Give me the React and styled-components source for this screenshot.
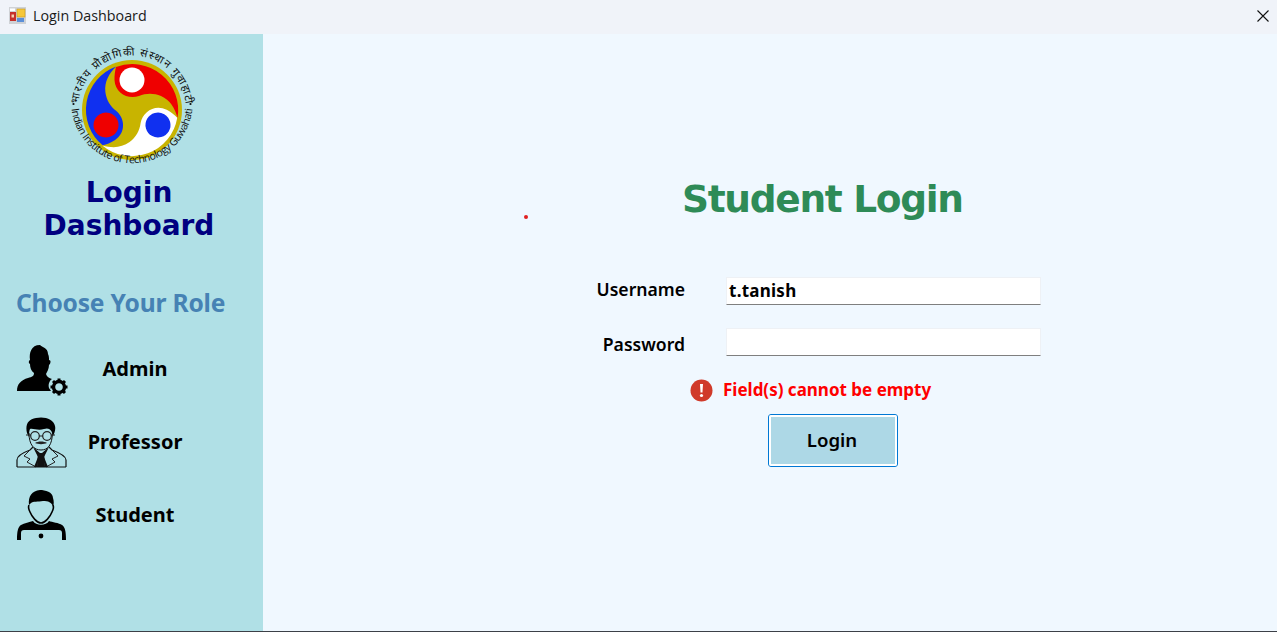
import React from "react";
import styled, { createGlobalStyle } from "styled-components";

const Global = createGlobalStyle`
  html, body { margin: 0; padding: 0; height: 100%; overflow: hidden; }
  #root { height: 100%; }
`;

const Window = styled.div`
  width: 1277px;
  height: 632px;
  display: flex;
  flex-direction: column;
  border-bottom: 1px solid #3c4047;
  box-sizing: border-box;
  font-family: "Noto Sans", sans-serif;
  overflow: hidden;
`;

const TitleBar = styled.header`
  height: 34px;
  flex: none;
  background: #f0f3f9;
  display: flex;
  align-items: center;
  padding: 0 7px 3px 9px;
  box-sizing: border-box;
  gap: 7px;
  color: #1a1a1a;
  font-size: 14.3px;
  font-family: "Open Sans", sans-serif;
`;

const TitleText = styled.span`
  flex: 1;
`;

const CloseButton = styled.button`
  width: 14px;
  height: 14px;
  padding: 0;
  border: 0;
  background: none;
  display: flex;
`;

const Body = styled.div`
  flex: 1;
  display: flex;
  min-height: 0;
`;

const Sidebar = styled.aside`
  width: 263px;
  flex: none;
  background: #b0e0e6;
  display: flex;
  flex-direction: column;
  padding-top: 8px;
  box-sizing: border-box;
`;

const LogoWrap = styled.div`
  display: flex;
  justify-content: center;
`;

const BrandTitle = styled.h1`
  margin: -2px 5px 0 0;
  font: 700 28px/33px "DejaVu Sans", sans-serif;
  color: #000080;
  text-align: center;
`;

const ChooseRole = styled.h2`
  margin: 45px 0 0 16px;
  font: 700 24.6px/32px "Noto Sans", sans-serif;
  letter-spacing: -0.2px;
  color: #4682b4;
`;

const RoleList = styled.div`
  margin: 25px 0 0 16px;
  width: 186px;
  display: flex;
  flex-direction: column;
  gap: 21px;
`;

const RoleRow = styled.div`
  display: grid;
  grid-template-columns: 52px 1fr;
  height: 52px;
  align-items: center;
`;

const RoleLabel = styled.span`
  font: 700 20px/24px "Noto Sans", sans-serif;
  color: #000;
  text-align: center;
  margin-top: -2px;
`;

const Main = styled.main`
  flex: 1;
  background: #f0f8ff;
  position: relative;
  display: flex;
  flex-direction: column;
  align-items: flex-start;
  padding: 141px 0 0 0;
  box-sizing: border-box;
`;

const Speck = styled.i`
  position: absolute;
  left: 261px;
  top: 181px;
  width: 4px;
  height: 4px;
  border-radius: 50%;
  background: #e02020;
`;

const FormTitle = styled.h2`
  margin: 0 0 0 419px;
  font: 700 37.5px/48px "DejaVu Sans", sans-serif;
  letter-spacing: -1.3px;
  color: #2e8b57;
`;

const Form = styled.form`
  margin: 54px 0 0 0;
  width: 100%;
  display: flex;
  flex-direction: column;
`;

const FieldRow = styled.div`
  display: grid;
  grid-template-columns: 422px 315px;
  column-gap: 41px;
  align-items: start;
  margin-bottom: 23px;
`;

const FieldLabel = styled.label`
  font: 600 17.6px/24px "Noto Sans", sans-serif;
  color: #000;
  text-align: right;
  margin-top: ${(p) => p.$top}px;
`;

const Input = styled.div`
  height: 28px;
  box-sizing: border-box;
  background: #fff;
  border: 1px solid #eef1f5;
  border-bottom: 1px solid #7f7f7f;
  padding: 0 2px;
  font: 700 17px/26px "Noto Sans", sans-serif;
  letter-spacing: 0.25px;
  color: #000;
`;

const ErrorRow = styled.div`
  margin: -1px 0 0 427px;
  height: 24px;
  display: flex;
  align-items: center;
  gap: 10px;
  color: #ff0000;
  font: 700 17px/22px "Noto Sans", sans-serif;
`;

const LoginButton = styled.button`
  margin: 12px 0 0 505px;
  width: 130px;
  height: 53px;
  box-sizing: border-box;
  background: #add8e6;
  border: 1px solid #0078d4;
  outline: 2px solid #fff;
  outline-offset: -3px;
  border-radius: 3px;
  padding: 0 2px 1px 0;
  font: 600 18.6px/24px "Noto Sans", sans-serif;
  color: #000;
`;

const AppIcon = () => (
  <svg width="17" height="17" viewBox="0 0 17 17">
    <rect x="0" y="0" width="17" height="17" fill="#cfd2d6" />
    <rect x="1" y="5" width="6" height="9" fill="#c62f2a" />
    <rect x="2.5" y="7.5" width="2.5" height="3" fill="#f3d0b0" />
    <rect x="8" y="2" width="8" height="8" fill="#f6c73a" stroke="#c89a20" strokeWidth="0.6" />
    <rect x="8" y="11" width="7" height="4" fill="#5b8fd8" />
    <rect x="1" y="1.5" width="5" height="2.5" fill="#fff" />
  </svg>
);

const CloseIcon = () => (
  <svg width="14" height="14" viewBox="0 0 14 14">
    <path d="M1.5 1.5L12.5 12.5M12.5 1.5L1.5 12.5" stroke="#111" strokeWidth="1.1" fill="none" />
  </svg>
);

const SWIRL =
  "M-16 -43 A 46 46 0 0 1 45.5 8 C 43 -2 38 -10 29 -14 C 22 -17 14 -17 7 -14 C -4 -10 -17 -17 -17.5 -30 C -17.6 -35 -17 -39 -16 -43 Z";

const Logo = () => (
  <svg width="136" height="136" viewBox="-68 -68 136 136">
    <defs>
      <path id="bottomArc" d="M-60.7 -4 A 60.8 60.8 0 0 0 60.7 -4" />
      <path id="topArc" d="M-53.8 -5 A 54 54 0 0 1 53.8 -5" />
    </defs>
    <circle r="50" fill="#c8b400" />
    <path d={SWIRL} fill="#ef0000" />
    <circle cx="0" cy="-30" r="12.5" fill="#fff" />
    <g transform="rotate(120)">
      <path d={SWIRL} fill="#fff" />
      <circle cx="0" cy="-30" r="12.5" fill="#1030f0" />
    </g>
    <g transform="rotate(240)">
      <path d={SWIRL} fill="#1030f0" />
      <circle cx="0" cy="-30" r="12.5" fill="#ef0000" />
    </g>
    <text fontFamily="'Open Sans', sans-serif" fontSize="10.5" fill="#111">
      <textPath href="#bottomArc" startOffset="50%" textAnchor="middle" textLength="178">
        Indian Institute of Technology Guwahati
      </textPath>
    </text>
    <text fontFamily="'Noto Sans', 'DejaVu Sans', sans-serif" fontSize="11" fill="#111">
      <textPath href="#topArc" startOffset="50%" textAnchor="middle" textLength="158" lengthAdjust="spacing">
        भारतीय प्रौद्योगिकी संस्थान गुवाहाटी
      </textPath>
    </text>
    <circle cx="-58.5" cy="-6" r="1.1" fill="#111" />
    <circle cx="58.5" cy="-6" r="1.1" fill="#111" />
  </svg>
);

const AdminIcon = () => (
  <svg width="52" height="52" viewBox="0 0 52 52">
    <path
      d="M1 47 C1 40 5 36 12 34 C16 33 18 32 18 29 C15 27 14 23 14 20 C12 19 13 16 14 16 C13 9 15 1 24 1 C26 3 32 4 32 10 C33 12 33 14 33 16 C35 16 35 19 33 21 C33 25 31 28 30 30 C31 33 33 34 36 35 C33 37 32 41 33 44 L35 47 Z"
      fill="#000"
    />
    <g transform="translate(43 43)">
      <circle r="5.5" fill="none" stroke="#000" strokeWidth="3.4" />
      <path
        d="M0 -8.500V-6M0 6V8.500M-8.500 0H-6M6 0H8.500M-6 -6L-4.200 -4.200M4.200 4.200L6 6M6 -6L4.200 -4.200M-4.200 4.200L-6 6"
        stroke="#000"
        strokeWidth="3"
      />
    </g>
  </svg>
);

const ProfessorIcon = () => (
  <svg width="52" height="52" viewBox="0 0 52 52" fill="none">
    <path d="M11 16 C9 8 12 2 20 1 C28 -1 38 2 39 9 C40 13 38 17 37 19 C36 13 33 10 28 12 C22 14 17 11 14 12 C13 14 13 17 13 20 Z" fill="#000" />
    <path d="M13 16 C13 28 18 33 25 33 C32 33 36 28 36.500 16" stroke="#111" strokeWidth="1" />
    <circle cx="19" cy="19" r="4.300" stroke="#222" strokeWidth="1.200" />
    <circle cx="31" cy="19" r="4.300" stroke="#222" strokeWidth="1.200" />
    <path d="M23 19H27M10 18H15M35 18H39" stroke="#222" strokeWidth="1" />
    <path d="M19 26 C22 24 28 24 31 26 C28 27.500 22 27.500 19 26Z" fill="#222" />
    <path d="M1 50 V43 C1 39 6 36 14 33 L17 30 M50 50 V43 C50 39 44 36 36 33 L33 30 M1 50 H50" stroke="#111" strokeWidth="1.200" />
    <path d="M14 33 L8 39 L14 42 L11 45 L20 50 M36 33 L42 39 L36 42 L39 45 L30 50" stroke="#222" strokeWidth="1" />
    <path d="M17 30 L22 40 L18 50 H21 L24 36 Z M33 30 L28 40 L32 50 H29 L26 36 Z" fill="#111" />
    <path d="M22 36 H28 L29 50 H21Z" fill="#111" />
  </svg>
);

const StudentIcon = () => (
  <svg width="52" height="52" viewBox="0 0 52 52">
    <path d="M13 15 C12 6 16 1 24 0 C29 0 37 2 37 8 C38 11 38 14 37 17 C36 12 32 11 27 11 C22 12 17 11 15 13 Z" fill="#000" />
    <path d="M13 15 C12 17 13 20 14 22 C16 27 21 33 25 33 C29 33 34 27 36 22 C37 20 38 17 37 15" fill="none" stroke="#000" strokeWidth="1.600" />
    <path d="M17 31 C14 32 8 33 5 35 C2 37 1 41 1 50 H5 V43 C5 41 6 40 8 40 H43 C45 40 46 41 46 43 V50 H50 C50 41 49 37 46 35 C43 33 36 32 33 31 C30 36 20 36 17 31 Z" fill="#000" />
    <circle cx="25" cy="46" r="2.400" fill="#000" />
  </svg>
);

const ErrorIcon = () => (
  <svg width="23" height="23" viewBox="0 0 23 23">
    <circle cx="11.500" cy="11.500" r="11" fill="#d03a2a" />
    <path d="M10 5 H13 L12.500 13.500 H10.500 Z" fill="#fff" />
    <circle cx="11.500" cy="16.500" r="1.600" fill="#fff" />
  </svg>
);

const roles = [
  { name: "Admin", Icon: AdminIcon },
  { name: "Professor", Icon: ProfessorIcon },
  { name: "Student", Icon: StudentIcon },
];

export default function App() {
  return (
    <Window>
      <Global />
      <TitleBar>
        <AppIcon />
        <TitleText>Login Dashboard</TitleText>
        <CloseButton aria-label="Close">
          <CloseIcon />
        </CloseButton>
      </TitleBar>
      <Body>
        <Sidebar>
          <LogoWrap>
            <Logo />
          </LogoWrap>
          <BrandTitle>
            Login
            <br />
            Dashboard
          </BrandTitle>
          <ChooseRole>Choose Your Role</ChooseRole>
          <RoleList>
            {roles.map(({ name, Icon }) => (
              <RoleRow key={name}>
                <Icon />
                <RoleLabel>{name}</RoleLabel>
              </RoleRow>
            ))}
          </RoleList>
        </Sidebar>
        <Main>
          <Speck />
          <FormTitle>Student Login</FormTitle>
          <Form>
            <FieldRow>
              <FieldLabel $top={0}>Username</FieldLabel>
              <Input>t.tanish</Input>
            </FieldRow>
            <FieldRow>
              <FieldLabel $top={4}>Password</FieldLabel>
              <Input />
            </FieldRow>
            <ErrorRow>
              <ErrorIcon />
              <span>Field(s) cannot be empty</span>
            </ErrorRow>
            <LoginButton type="button">Login</LoginButton>
          </Form>
        </Main>
      </Body>
    </Window>
  );
}
